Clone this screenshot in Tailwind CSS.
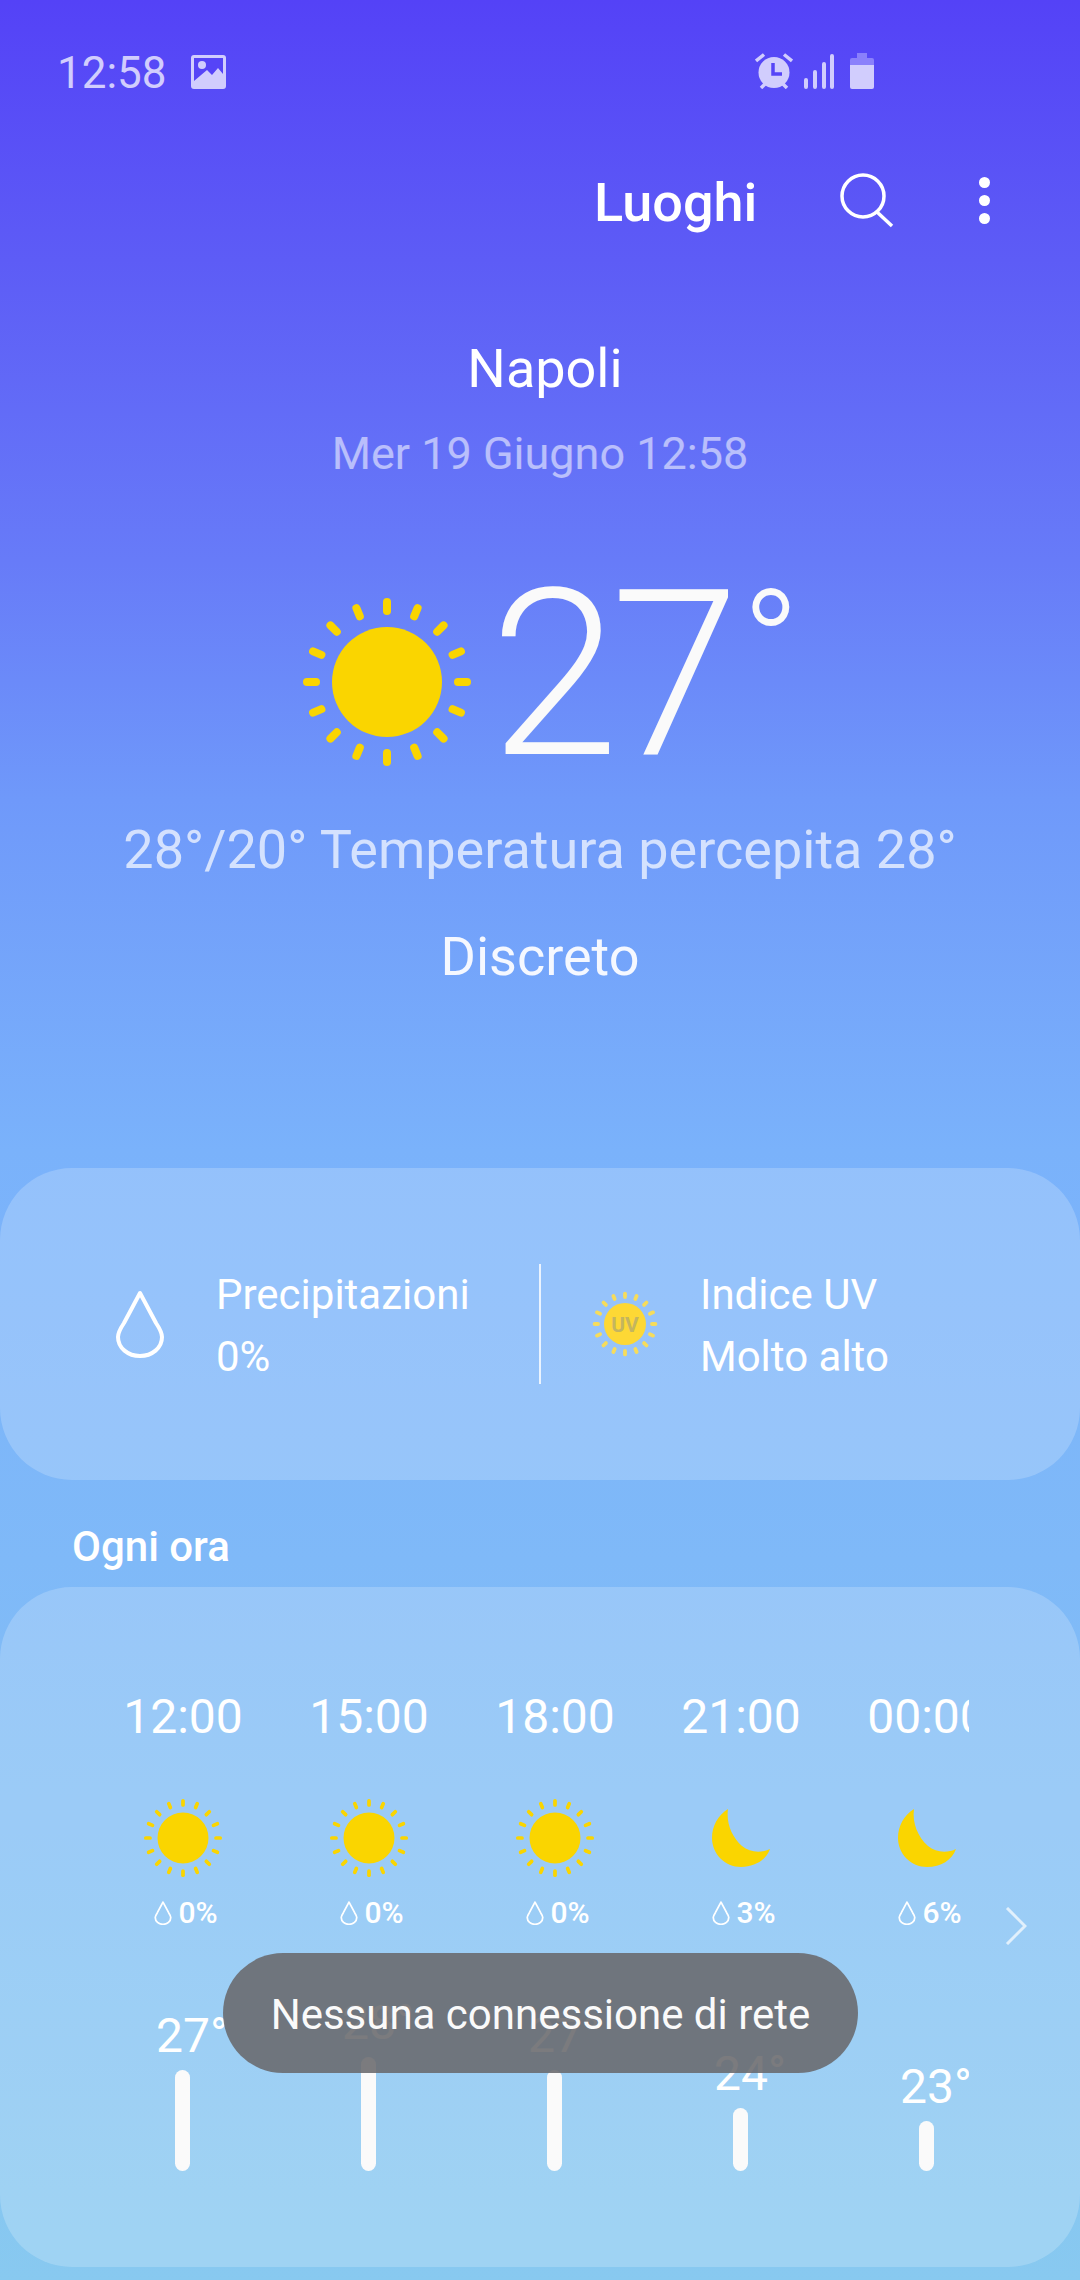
<!DOCTYPE html>
<html lang="it">
<head>
    <meta charset="UTF-8">
    <meta name="viewport" content="width=device-width, initial-scale=1.0">
    <title>Meteo Napoli</title>
    <script src="https://cdn.jsdelivr.net/npm/@tailwindcss/browser@4"></script>
</head>
<body class="font-['Roboto',sans-serif]">
    <!-- Shared icons -->
    <svg class="hidden">
        <defs>
            <g id="rays" stroke-linecap="round">
                <line x1="0" y1="-71" x2="0" y2="-80"/>
                <line x1="0" y1="-71" x2="0" y2="-80" transform="rotate(22.5)"/>
                <line x1="0" y1="-71" x2="0" y2="-80" transform="rotate(45)"/>
                <line x1="0" y1="-71" x2="0" y2="-80" transform="rotate(67.5)"/>
                <line x1="0" y1="-71" x2="0" y2="-80" transform="rotate(90)"/>
                <line x1="0" y1="-71" x2="0" y2="-80" transform="rotate(112.5)"/>
                <line x1="0" y1="-71" x2="0" y2="-80" transform="rotate(135)"/>
                <line x1="0" y1="-71" x2="0" y2="-80" transform="rotate(157.5)"/>
                <line x1="0" y1="-71" x2="0" y2="-80" transform="rotate(180)"/>
                <line x1="0" y1="-71" x2="0" y2="-80" transform="rotate(202.5)"/>
                <line x1="0" y1="-71" x2="0" y2="-80" transform="rotate(225)"/>
                <line x1="0" y1="-71" x2="0" y2="-80" transform="rotate(247.5)"/>
                <line x1="0" y1="-71" x2="0" y2="-80" transform="rotate(270)"/>
                <line x1="0" y1="-71" x2="0" y2="-80" transform="rotate(292.5)"/>
                <line x1="0" y1="-71" x2="0" y2="-80" transform="rotate(315)"/>
                <line x1="0" y1="-71" x2="0" y2="-80" transform="rotate(337.5)"/>
            </g>
            <g id="sun-small">
                <circle cx="40" cy="40" r="25.5" fill="#fad500"/>
                <g transform="translate(40 40) scale(.465)" stroke="#fad500" stroke-width="8"><use href="#rays"/></g>
            </g>
            <path id="moon" fill="#fad500" d="M16 0C6 6 0 17 0 29C0 45 13 58 29 58C43 58 54 51 58 40C50 44 38 44 30 37C20 28 14 14 16 0Z"/>
            <path id="drop" fill="none" stroke="#fff" stroke-linejoin="round" d="M24 3L8 33C4 39 2 43 2 47C2 58 12 66 24 66C36 66 46 58 46 47C46 43 44 39 40 33Z"/>
        </defs>
    </svg>

    <div class="relative w-[1080px] h-[2280px] overflow-hidden text-white bg-[linear-gradient(180deg,#5442f7_0px,#5d5cf6_260px,#677bf8_560px,#6f99fa_800px,#7ab2fb_1150px,#7fb9f8_1560px,#88c9f0_2280px)]">

        <!-- Status bar -->
        <div class="flex items-center h-[56px] mt-[45px] pl-[57px] text-[#d1cdfd]">
            <span class="text-[44px] leading-[56px]">12:58</span>
            <svg class="ml-[24px] mb-[2px] w-[35px] h-[34px]" viewBox="0 0 35 34">
                <rect width="35" height="34" rx="3" fill="#d1cdfd"/>
                <path d="M3 3h29v16l-5-6-6 7-5-5-13 11z" fill="#5644f7"/>
                <circle cx="11" cy="10" r="4" fill="#d1cdfd"/>
            </svg>
            <svg class="ml-[529px] mb-[4px] w-[38px] h-[36px]" viewBox="0 0 38 36">
                <circle cx="19" cy="19.500" r="15.500" fill="#d1cdfd"/>
                <path d="M1 8L9 1.500M37 8L29 1.500M6 35l4-4M32 35l-4-4" stroke="#d1cdfd" stroke-width="3.500"/>
                <path d="M18 10v11h9" fill="none" stroke="#5644f7" stroke-width="3.500"/>
            </svg>
            <svg class="ml-[11px] mb-[4px] w-[30px] h-[36px]" viewBox="0 0 30 36" stroke="#d1cdfd" stroke-width="4" stroke-linecap="round">
                <path d="M2 27v7M11 19v15M20 11v23M28 3v31"/>
            </svg>
            <svg class="ml-[16px] mb-[4px] w-[24px] h-[36px]" viewBox="0 0 24 36">
                <path d="M7 0h10v5H7z" fill="#8a80fb"/>
                <path d="M2 5h20a2 2 0 0 1 2 2v5H0V7a2 2 0 0 1 2-2z" fill="#8a80fb"/>
                <path d="M0 12h24v22a2 2 0 0 1-2 2H2a2 2 0 0 1-2-2z" fill="#d1cdfd"/>
            </svg>
        </div>

        <!-- Toolbar -->
        <div class="flex items-center h-[80px] mt-[59px] pl-[594px]">
            <span class="pt-[5px] text-[54px] leading-[80px] font-medium">Luoghi</span>
            <svg class="ml-[82px] mt-[1px] w-[55px] h-[55px]" viewBox="0 0 55 55" fill="none" stroke="#fff" stroke-width="3.500">
                <circle cx="24" cy="23" r="21"/>
                <path d="M38 39L53 53"/>
            </svg>
            <div class="flex flex-col gap-[7px] ml-[85px]">
                <div class="w-[11px] h-[11px] rounded-full bg-white"></div>
                <div class="w-[11px] h-[11px] rounded-full bg-white"></div>
                <div class="w-[11px] h-[11px] rounded-full bg-white"></div>
            </div>
        </div>

        <!-- Location -->
        <div class="mt-[99px] pl-[10px] text-center text-[54px] leading-[60px]">Napoli</div>
        <div class="mt-[25px] text-center text-[45px] leading-[60px] text-white/55">Mer 19 Giugno 12:58</div>

        <!-- Current temperature -->
        <div class="flex items-center h-[240px] mt-[76px] pl-[299px]">
            <svg class="w-[176px] h-[176px] mt-[4px]" viewBox="-88 -88 176 176">
                <circle r="55" fill="#fad500"/>
                <g stroke="#fad500" stroke-width="8"><use href="#rays"/></g>
            </svg>
            <span class="ml-[15px] mb-[10px] text-[232px] leading-[240px] font-light tracking-[-8px] text-[#fafafa]">27<span class="ml-[10px] text-[155px] leading-[0] tracking-normal align-[53px]">°</span></span>
        </div>

        <div class="mt-[20px] text-center text-[54px] leading-[60px] text-white/70">28°/20° Temperatura percepita 28°</div>
        <div class="mt-[47px] text-center text-[54px] leading-[60px] text-[#f5f8ff]">Discreto</div>

        <!-- Precipitation and UV -->
        <div class="flex items-center h-[312px] mt-[181px] rounded-[72px] bg-white/20">
            <div class="flex items-center w-[541px] h-[120px] pl-[115px] border-r-[2px] border-white/80">
                <svg class="w-[50px] h-[70px]" viewBox="-1 -1 50 70"><use href="#drop" stroke-width="4"/></svg>
                <div class="ml-[51px] pt-[4px] text-[42px] leading-[62px]">
                    <div>Precipitazioni</div>
                    <div>0%</div>
                </div>
            </div>
            <div class="flex items-center pl-[51px]">
                <svg class="w-[66px] h-[66px]" viewBox="-33 -33 66 66">
                    <circle r="21" fill="#fdd835"/>
                    <g transform="scale(.38)" stroke="#f6dc5c" stroke-width="10"><use href="#rays"/></g>
                    <text y="7.500" text-anchor="middle" font-size="21" font-weight="700" fill="#c4b55f">UV</text>
                </svg>
                <div class="ml-[42px] pt-[4px] text-[42px] leading-[62px]">
                    <div>Indice UV</div>
                    <div>Molto alto</div>
                </div>
            </div>
        </div>

        <div class="mt-[37px] pl-[72px] text-[42px] leading-[60px] font-medium">Ogni ora</div>

        <!-- Hourly forecast -->
        <div class="relative h-[680px] mt-[10px] rounded-[72px] bg-white/20">
            <div class="flex w-[879px] h-[584px] ml-[90px] overflow-hidden">
                <div class="flex flex-col items-center shrink-0 w-[186px] pt-[100px]">
                    <div class="text-[48px] leading-[60px]">12:00</div>
                    <svg class="w-[80px] h-[80px] mt-[51px]" viewBox="0 0 80 80"><use href="#sun-small"/></svg>
                    <div class="flex items-center mt-[20px] h-[30px] pl-[6px]">
                        <svg class="w-[18px] h-[24px] mr-[6px]" viewBox="0 0 48 68"><use href="#drop" stroke-width="5"/></svg>
                        <span class="text-[30px] leading-[30px] font-medium">0%</span>
                    </div>
                    <div class="flex flex-col flex-1 items-center justify-end">
                        <div class="pl-[18px] text-[48px] leading-[60px]">27°</div>
                        <div class="w-[15px] h-[101px] mt-[4px] rounded-full bg-[#fafafa]"></div>
                    </div>
                </div>
                <div class="flex flex-col items-center shrink-0 w-[186px] pt-[100px]">
                    <div class="text-[48px] leading-[60px]">15:00</div>
                    <svg class="w-[80px] h-[80px] mt-[51px]" viewBox="0 0 80 80"><use href="#sun-small"/></svg>
                    <div class="flex items-center mt-[20px] h-[30px] pl-[6px]">
                        <svg class="w-[18px] h-[24px] mr-[6px]" viewBox="0 0 48 68"><use href="#drop" stroke-width="5"/></svg>
                        <span class="text-[30px] leading-[30px] font-medium">0%</span>
                    </div>
                    <div class="flex flex-col flex-1 items-center justify-end">
                        <div class="pl-[18px] text-[48px] leading-[60px]">28°</div>
                        <div class="w-[15px] h-[114px] mt-[4px] rounded-full bg-[#fafafa]"></div>
                    </div>
                </div>
                <div class="flex flex-col items-center shrink-0 w-[186px] pt-[100px]">
                    <div class="text-[48px] leading-[60px]">18:00</div>
                    <svg class="w-[80px] h-[80px] mt-[51px]" viewBox="0 0 80 80"><use href="#sun-small"/></svg>
                    <div class="flex items-center mt-[20px] h-[30px] pl-[6px]">
                        <svg class="w-[18px] h-[24px] mr-[6px]" viewBox="0 0 48 68"><use href="#drop" stroke-width="5"/></svg>
                        <span class="text-[30px] leading-[30px] font-medium">0%</span>
                    </div>
                    <div class="flex flex-col flex-1 items-center justify-end">
                        <div class="pl-[18px] text-[48px] leading-[60px]">27°</div>
                        <div class="w-[15px] h-[101px] mt-[4px] rounded-full bg-[#fafafa]"></div>
                    </div>
                </div>
                <div class="flex flex-col items-center shrink-0 w-[186px] pt-[100px]">
                    <div class="text-[48px] leading-[60px]">21:00</div>
                    <svg class="w-[58px] h-[58px] mt-[62px] mb-[11px]" viewBox="0 0 58 58"><use href="#moon"/></svg>
                    <div class="flex items-center mt-[20px] h-[30px] pl-[6px]">
                        <svg class="w-[18px] h-[24px] mr-[6px]" viewBox="0 0 48 68"><use href="#drop" stroke-width="5"/></svg>
                        <span class="text-[30px] leading-[30px] font-medium">3%</span>
                    </div>
                    <div class="flex flex-col flex-1 items-center justify-end">
                        <div class="pl-[18px] text-[48px] leading-[60px]">24°</div>
                        <div class="w-[15px] h-[63px] mt-[4px] rounded-full bg-[#fafafa]"></div>
                    </div>
                </div>
                <div class="flex flex-col items-center shrink-0 w-[186px] pt-[100px]">
                    <div class="text-[48px] leading-[60px]">00:00</div>
                    <svg class="w-[58px] h-[58px] mt-[62px] mb-[11px]" viewBox="0 0 58 58"><use href="#moon"/></svg>
                    <div class="flex items-center mt-[20px] h-[30px] pl-[6px]">
                        <svg class="w-[18px] h-[24px] mr-[6px]" viewBox="0 0 48 68"><use href="#drop" stroke-width="5"/></svg>
                        <span class="text-[30px] leading-[30px] font-medium">6%</span>
                    </div>
                    <div class="flex flex-col flex-1 items-center justify-end">
                        <div class="pl-[18px] text-[48px] leading-[60px]">23°</div>
                        <div class="w-[15px] h-[50px] mt-[4px] rounded-full bg-[#fafafa]"></div>
                    </div>
                </div>
            </div>
            <svg class="absolute left-[1005px] top-[320px] w-[22px] h-[38px]" viewBox="0 0 22 38" fill="none" stroke="#fff" stroke-opacity=".7" stroke-width="3">
                <path d="M2 1L20 19L2 37"/>
            </svg>
        </div>

        <!-- Toast -->
        <div class="absolute left-[223px] top-[1953px] flex items-center justify-center w-[635px] h-[120px] pt-[3px] rounded-full bg-[#69696c]/88 text-[42px] text-[#fafafa]">Nessuna connessione di rete</div>
    </div>
</body>
</html>
